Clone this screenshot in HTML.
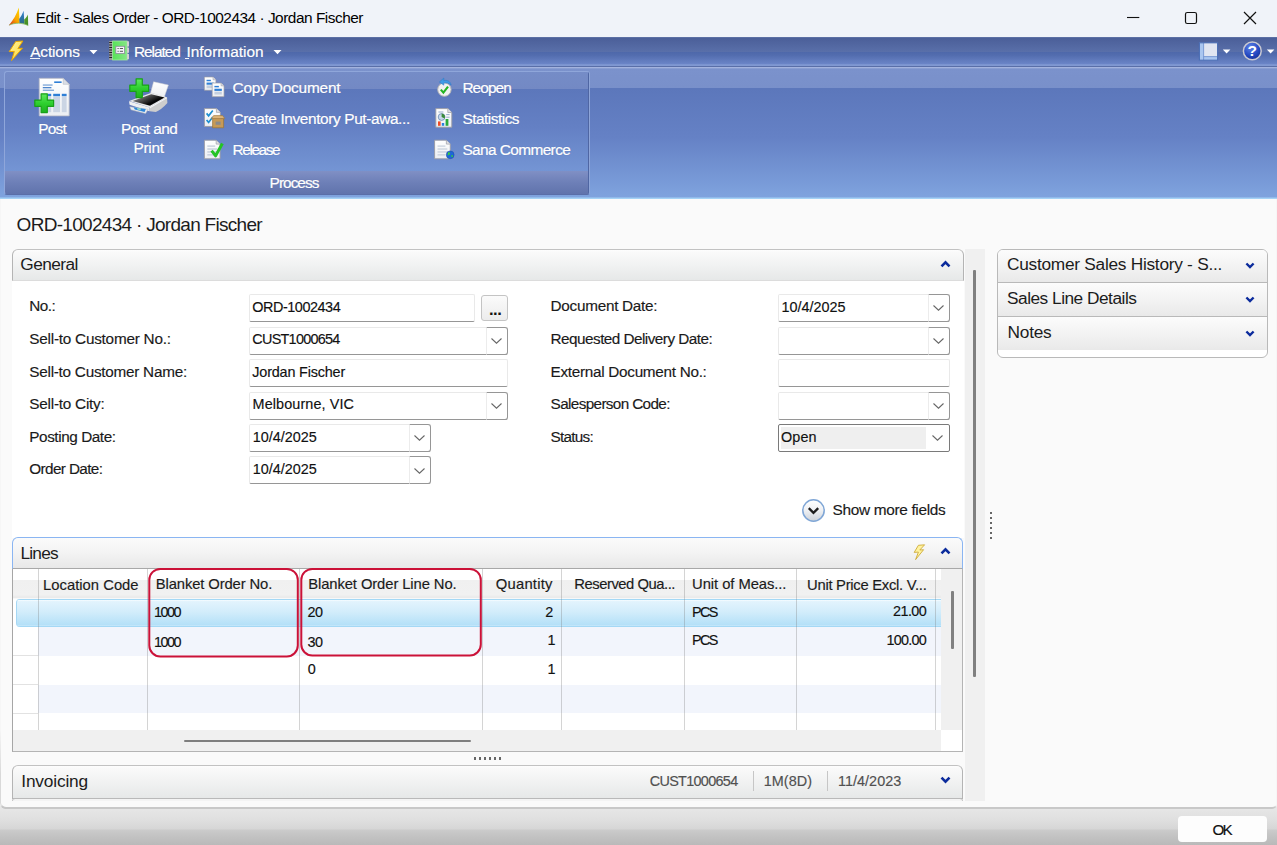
<!DOCTYPE html><html lang="en"><head><meta charset="utf-8"><title>Edit - Sales Order - ORD-1002434 · Jordan Fischer</title><style>
*{box-sizing:border-box;margin:0;padding:0}
html,body{width:1277px;height:845px;overflow:hidden;background:#fafafa}
body{position:relative;font-family:"Liberation Sans",sans-serif;}
.t{position:absolute;white-space:nowrap;font-family:"Liberation Sans",sans-serif;}
.a{position:absolute}
svg{position:absolute;overflow:visible}
.sh{-webkit-text-stroke:.22px #fff;text-shadow:0 0 1px rgba(40,60,120,.3)}
.dk{-webkit-text-stroke:.15px currentColor}
/* inputs */
.in{position:absolute;background:#fff;border:1px solid #e9e9e9;border-bottom:1px solid #969696;border-radius:2px;height:28px}
.dd{position:absolute;right:-1px;top:-1px;width:22px;height:28px;border-left:1px solid #ececec;border-top:1px solid #969696;border-right:1px solid #969696;border-bottom:1px solid #969696;border-radius:0 3px 3px 0;background:#fff}
.dd svg{left:4.4px;top:10.2px}
.hdr{position:absolute;border:1px solid #b4b4b4;border-top:1.5px solid #c2c2c2;border-bottom:1px solid #dcdcdc;border-radius:6px 6px 0 0;background:linear-gradient(#fdfdfd 0,#fafafa 2px,#f1f2f2 50%,#e6e8e8)}
</style></head><body>
<div class="a" style="left:0;top:0;width:1277px;height:37px;background:#f0f3f9"></div>
<svg style="left:0;top:0" width="40" height="37" viewBox="0 0 40 37"><defs><linearGradient id="nv1" x1="0.9" y1="0" x2="0.1" y2="1"><stop offset="0" stop-color="#ffd400"/><stop offset=".55" stop-color="#f8a400"/><stop offset="1" stop-color="#d8301a"/></linearGradient><linearGradient id="nv2" x1="0" y1="0" x2="0" y2="1"><stop offset="0" stop-color="#2f7fd0"/><stop offset="1" stop-color="#2c6a86"/></linearGradient><linearGradient id="nv3" x1="0" y1="0" x2="0" y2="1"><stop offset="0" stop-color="#5aa02a"/><stop offset="1" stop-color="#3f8a24"/></linearGradient></defs>
<path d="M18.8 7.4 C16.9 14 13.2 20 8.8 25.4 C12.6 23.5 16 22.9 19.7 23 Z" fill="url(#nv1)"/>
<path d="M23.6 10.8 C22.4 14 21 16.6 19.2 19 L19.5 23 C21.2 23 22.8 23.4 24.5 23.9 Z" fill="url(#nv2)"/>
<path d="M27.9 14.4 C27 16.4 25.8 18 24.2 19.6 L24.4 23.9 C25.7 24.3 27 24.9 28.2 25.6 Z" fill="url(#nv3)"/>
<path d="M9.200 25.100 C15 22.600 22 22.600 28.200 25.500" fill="none" stroke="#7ab648" stroke-width=".7"/>
</svg>

<span class="t " style="left:35.70px;top:7.86px;font-size:15.40px;line-height:20px;letter-spacing:-0.477px;color:#000;">Edit - Sales Order - ORD-1002434 · Jordan Fischer</span>
<svg style="left:1120px;top:5px" width="150" height="26" viewBox="1120 5 150 26"><path d="M1127 17.5H1139.3" stroke="#111" stroke-width="1.1" fill="none"/><rect x="1185.5" y="12.5" width="11" height="11" rx="1.8" fill="none" stroke="#111" stroke-width="1.2"/><path d="M1244 12 L1256 24 M1256 12 L1244 24" stroke="#111" stroke-width="1.2" fill="none"/></svg>
<div class="a" style="left:0;top:37px;width:1277px;height:29px;background:linear-gradient(#485c96 0,#4c609a 2px,#596fa9 14.7px,#4e68aa 15.2px,#526cae 18px,#6b85c7 27px,#7f97d1 27.6px,#8199d2 29px)"></div>
<div class="a" style="left:0;top:37px;width:1277px;height:1px;background:#5b6fa4"></div>
<div class="a" style="left:0;top:65.6px;width:1277px;height:1.2px;background:#5a6fa8"></div>
<svg style="left:0;top:37px" width="1277" height="30" viewBox="0 37 1277 30"><defs><linearGradient id="lt1" x1="0" y1="0" x2="1" y2="1"><stop offset="0" stop-color="#fff2a8"/><stop offset=".6" stop-color="#ffe45c"/><stop offset="1" stop-color="#f5b800"/></linearGradient><radialGradient id="hp1" cx=".4" cy=".3" r=".8"><stop offset="0" stop-color="#5f84e8"/><stop offset=".6" stop-color="#2347c0"/><stop offset="1" stop-color="#12298a"/></radialGradient><linearGradient id="nb1" x1="0" y1="0" x2="1" y2="0"><stop offset="0" stop-color="#58e458"/><stop offset="1" stop-color="#86e486"/></linearGradient></defs>
<path d="M22.9 41 L15.7 41.5 L9.2 51.6 L14.3 51.4 L11.6 60.6 L22.4 48.2 L17.9 48.5 Z" fill="url(#lt1)" stroke="#e8a700" stroke-width="1" stroke-linejoin="round"/>
<path d="M89.5 50 h8 l-4 4.2 z M273.5 50 h8 l-4 4.2 z" fill="#fff"/>
<rect x="109.2" y="41" width="3.6" height="19" fill="#9a9a9a"/><path d="M109.2 42.5h3.6M109.2 45h3.6M109.2 47.5h3.6M109.2 50h3.6M109.2 52.5h3.6M109.2 55h3.6M109.2 57.5h3.6" stroke="#222" stroke-width="1.2"/>
<rect x="112.6" y="41" width="14.6" height="19" fill="url(#nb1)" stroke="#a4e8a4" stroke-width=".8"/><rect x="127" y="41.3" width="2" height="5.2" fill="#cfcfcf"/><rect x="127" y="47.6" width="2" height="5.2" fill="#cfcfcf"/><rect x="127" y="54" width="2" height="5.2" fill="#cfcfcf"/>
<rect x="115.8" y="46.3" width="8.8" height="7.2" fill="#f4f4f8" stroke="#8a8a9a" stroke-width=".8"/><path d="M117.5 48.5h1.2M119.8 48.5h3.2M117.5 51.3h1.2M119.8 51.3h3.2" stroke="#555" stroke-width="1"/>
<rect x="1199.4" y="42.8" width="18.2" height="17.4" fill="#e0e5f1"/><rect x="1199.4" y="42.8" width="3.8" height="17.4" fill="#a9c6f0"/><rect x="1203.2" y="56.8" width="14.4" height="3.4" fill="#a9c6f0"/><path d="M1203.6 42.8V60.2M1203.6 56.600H1217.600" stroke="#6f93d2" stroke-width=".9" fill="none"/><rect x="1199.4" y="42.8" width="18.2" height="17.4" fill="none" stroke="#4a6db4" stroke-width="1.1"/>
<path d="M1222.8 49.5 h7.6 l-3.8 4 z M1266.8 49.5 h7.6 l-3.8 4 z" fill="#fff"/>
<circle cx="1252.3" cy="50.9" r="8.9" fill="url(#hp1)" stroke="#c9c9d2" stroke-width="1.5"/>
<text x="1252.3" y="56.4" text-anchor="middle" font-family="Liberation Sans, sans-serif" font-weight="bold" font-size="15.5" fill="#fff">?</text>
</svg>

<span class="t sh" style="left:30.20px;top:41.86px;font-size:15.40px;line-height:20px;letter-spacing:-0.133px;color:#fff;">Actions</span>
<div class="a" style="left:30px;top:58.3px;width:10.2px;height:1.1px;background:#f4f6fb"></div>
<span class="t sh" style="left:134.00px;top:41.86px;font-size:15.40px;line-height:20px;letter-spacing:-1.047px;color:#fff;">Related</span>
<span class="t sh" style="left:186.40px;top:41.86px;font-size:15.40px;line-height:20px;letter-spacing:0.027px;color:#fff;">Information</span>
<div class="a" style="left:185.4px;top:58.3px;width:3.8px;height:1.1px;background:#f4f6fb"></div>
<div class="a" style="left:0;top:67px;width:1277px;height:130px;background:linear-gradient(#a6b5de 0,#a0b0dc 1px,#7b92cc 1.8px,#7990ca 21px,#5c77bb 21.5px,#6581c5 70px,#7fa3de 130px)"></div>
<div class="a" style="left:0;top:197px;width:1277px;height:2.7px;background:linear-gradient(#86a8e0 0,#9ccbf3 1px,#a9d6f7 1.8px,#e6f1fb 2.7px)"></div>
<div class="a" style="left:4px;top:71px;width:586px;height:124px;border-radius:3px;border-left:1px solid #8fa6da;border-top:1px solid #8fa6da;border-right:1px solid #8ea5d8;border-bottom:1px solid #5a6ea8;overflow:hidden;background:linear-gradient(#758cc7 0,#7389c4 17px,#5c77bb 17.5px,#6480c4 55px,#7495d4 99px,#7f8fc4 99.5px,#6e80b8 110px,#5f72ab 123px)"><div class="a" style="right:0;top:0;width:1px;height:124px;background:#4f66a3"></div></div>
<svg style="left:0;top:67px" width="600" height="130" viewBox="0 67 600 130"><defs>
<linearGradient id="gp" x1="0" y1="0" x2="0" y2="1"><stop offset="0" stop-color="#5fe85f"/><stop offset=".5" stop-color="#2fd02f"/><stop offset="1" stop-color="#1db01d"/></linearGradient>
<linearGradient id="dc" x1="0" y1="0" x2="0" y2="1"><stop offset="0" stop-color="#ffffff"/><stop offset="1" stop-color="#eceef2"/></linearGradient>
<linearGradient id="pt" x1="0" y1="0" x2="1" y2=".7"><stop offset="0" stop-color="#b4b4b4"/><stop offset=".45" stop-color="#4a4a4a"/><stop offset=".75" stop-color="#050505"/><stop offset="1" stop-color="#2a2a2a"/></linearGradient>
<g id="plus"><path d="M6.9 0.6 h6.2 v6.3 h6.3 v6.2 h-6.3 v6.3 h-6.2 v-6.3 h-6.3 v-6.2 h6.3 z" fill="url(#gp)" stroke="#18a018" stroke-width="1.2" stroke-linejoin="round"/></g>
<g id="sdoc"><path d="M0 0 h12 l4 4 v15 h-16 z" fill="url(#dc)" stroke="#9a9aa2" stroke-width=".9"/><path d="M12 0 v4 h4" fill="#e0e0e4" stroke="#9a9aa2" stroke-width=".7"/></g>
</defs>
<!-- Post -->
<path d="M39.2 78.3 h24 l6 6 v31.6 h-30 z" fill="url(#dc)" stroke="#b4b8c4" stroke-width=".8"/><path d="M63.2 78.3 v6 h6 z" fill="#dcdfe6" stroke="#b4b8c4" stroke-width=".6"/>
<rect x="54.2" y="81.4" width="7.4" height="1.6" fill="#2f7fd6"/><rect x="42.8" y="84.4" width="9.8" height="1.3" fill="#7da6d8"/><rect x="42.8" y="87" width="8.6" height="1.3" fill="#4e86cc"/><rect x="42.8" y="89.6" width="11.2" height="1.3" fill="#7da6d8"/>
<rect x="47.6" y="96.6" width="3.6" height="15.6" fill="#cbd5e4"/><rect x="53.2" y="96.6" width="6.8" height="15.6" fill="#cbd5e4"/><rect x="61.8" y="96.6" width="4.8" height="15.6" fill="#cbd5e4"/>
<rect x="47.6" y="93.8" width="3.6" height="2.4" fill="#2f7fd6"/><rect x="53.2" y="93.8" width="6.8" height="2.4" fill="#2f7fd6"/><rect x="61.8" y="93.8" width="4.8" height="2.4" fill="#2f7fd6"/>
<use href="#plus" x="34.2" y="93.2"/>
<!-- Post and Print -->
<path d="M153.6 81.8 L168.4 85 L164.2 97.2 L150.6 92.8 Z" fill="url(#dc)" stroke="#d0d0d0" stroke-width=".5"/>
<path d="M129.2 101 L151.4 92.8 L167 97.2 L149.6 107.6 Z" fill="#e9e9e9"/>
<path d="M132.6 100.9 L151.2 94.2 L164.6 97.6 L150 105.8 Z" fill="url(#pt)"/>
<path d="M129 101.2 L149.6 107.6 L149.6 111.2 L129.6 104.8 Z" fill="#f0f0f0"/>
<path d="M149.6 107.6 L167 97.4 L167.4 103 Q161.500 109.600 155.800 111.900 L149.600 111.200 Z" fill="#cdcdcd"/><path d="M149.8 107.700 L167 97.600" stroke="#f6f6f6" stroke-width="1.1"/>
<path d="M129.800 106.800 L148.200 109.300 L145.600 113.500 L131 109.800 Z" fill="#e6ebf2" stroke="#b8b8b8" stroke-width=".5"/><path d="M133.600 107.200 L145.800 109.100 L144.600 111.900 L134.800 109.400 Z" fill="#2f86d8"/><path d="M137 108 L141 108.600 L140.400 110.200 L137.400 109.600 Z" fill="#9fe0c0"/>
<use href="#plus" x="129.200" y="78.200"/>
<!-- Copy Document -->
<g transform="translate(204.4 77) scale(.72 .7)"><use href="#sdoc"/><rect x="3" y="4" width="6" height="2" fill="#2f7fd6"/><rect x="3" y="8" width="10" height="3" fill="#2f7fd6"/><rect x="3" y="12" width="10" height="4" fill="#c4cfdf"/></g>
<g transform="translate(212.2 83) scale(.74 .72)"><use href="#sdoc"/><rect x="3" y="4" width="6" height="2" fill="#2f7fd6"/><rect x="3" y="8" width="10" height="3" fill="#2f7fd6"/><rect x="3" y="12" width="10" height="4" fill="#c4cfdf"/></g>
<!-- Create Inventory Put-away -->
<g transform="translate(204.4 108.6) scale(1 .94)"><use href="#sdoc"/></g>
<path d="M206.6 113.4 l2 2.4 l4.2 -5.4 M206.6 120 l2 2.4 l4.2 -5.4" fill="none" stroke="#1f8fd0" stroke-width="1.7"/>
<path d="M212.6 118.4 h11 v9.4 h-11 z" fill="#c79a56" stroke="#9a7236" stroke-width=".7"/><path d="M211.4 118.6 l2.2 -3 h9 l2.2 3 z" fill="#dcb478" stroke="#9a7236" stroke-width=".6"/><rect x="215.6" y="121.6" width="5" height="3.2" fill="#8a8a8a"/>
<!-- Release -->
<g transform="translate(204.4 140.2) scale(.98 .98)"><use href="#sdoc"/><path d="M3 6h8M3 9h10M3 12h10M3 15h8" stroke="#a9b6cc" stroke-width=".9"/></g>
<path d="M211.6 150.6 L215.6 155.8 L222.4 143.6" fill="none" stroke="#24c424" stroke-width="3" stroke-linejoin="round"/>
<!-- Reopen -->
<circle cx="444.4" cy="89.6" r="6.7" fill="#f1f1f1" stroke="#b8b8b8" stroke-width="1"/>
<path d="M440.8 89.6 l2.6 3 l4.6 -6" fill="none" stroke="#22b422" stroke-width="2.1"/>
<path d="M451.2 85 C450.4 81.4 446.8 79.6 443.8 80.6 L443.8 78 L439.4 82 L443.8 85.2 L443.8 83 C446.2 82.4 448.8 83.2 451.2 85 Z" fill="#3f9ae6" stroke="#2a78c4" stroke-width=".5"/>
<!-- Statistics -->
<g transform="translate(435.8 108.6) scale(1 .98)"><use href="#sdoc"/></g>
<circle cx="441.6" cy="117" r="3.4" fill="#c8d8ea" stroke="#6a8ab4" stroke-width=".8"/><path d="M441.6 117 v-3.4 a3.4 3.4 0 0 1 3 5 z" fill="#3a8a3a"/>
<path d="M438.4 112h5M446.2 114.6h3.4M446.2 117.2h3.4" stroke="#8aa4c8" stroke-width=".9"/>
<rect x="438" y="121.4" width="2.6" height="4.4" fill="#f04a24"/><rect x="441.8" y="123" width="2.4" height="2.8" fill="#2a80e0"/><rect x="445.6" y="119" width="2.8" height="6.8" fill="#2aaa3a"/>
<!-- Sana Commerce -->
<g transform="translate(434.6 140.2) scale(.98 .98)"><use href="#sdoc"/><path d="M3 6h8M3 9h10M3 12h10M3 15h8" stroke="#b4bfd0" stroke-width=".9"/></g>
<circle cx="450.2" cy="154.8" r="3.9" fill="#1f66d8" stroke="#1a4aa4" stroke-width=".5"/><path d="M448 152.6 c1.4 -.8 2.6 .2 2 1.4 c-.6 1 -1.800 .8 -2.400 2 z M451.4 155.200 c1.200 -.4 2 .4 1.400 1.600 c-.6 .8 -1.600 .6 -1.400 -1.600 z" fill="#3ad03a"/>
</svg>

<span class="t sh" style="left:38.20px;top:119.26px;font-size:15.40px;line-height:20px;letter-spacing:-0.738px;color:#fff;">Post</span>
<span class="t sh" style="left:121.10px;top:119.26px;font-size:15.40px;line-height:20px;letter-spacing:-0.583px;color:#fff;">Post and</span>
<span class="t sh" style="left:133.50px;top:137.76px;font-size:15.40px;line-height:20px;letter-spacing:-0.291px;color:#fff;">Print</span>
<span class="t sh" style="left:232.60px;top:77.66px;font-size:15.40px;line-height:20px;letter-spacing:-0.201px;color:#fff;">Copy Document</span>
<span class="t sh" style="left:232.60px;top:108.86px;font-size:15.40px;line-height:20px;letter-spacing:-0.375px;color:#fff;">Create Inventory Put-awa...</span>
<span class="t sh" style="left:232.60px;top:140.26px;font-size:15.40px;line-height:20px;letter-spacing:-1.417px;color:#fff;">Release</span>
<span class="t sh" style="left:462.40px;top:77.66px;font-size:15.40px;line-height:20px;letter-spacing:-0.909px;color:#fff;">Reopen</span>
<span class="t sh" style="left:462.40px;top:108.86px;font-size:15.40px;line-height:20px;letter-spacing:-0.491px;color:#fff;">Statistics</span>
<span class="t sh" style="left:462.40px;top:140.26px;font-size:15.40px;line-height:20px;letter-spacing:-0.587px;color:#fff;">Sana Commerce</span>
<span class="t sh" style="left:269.60px;top:172.96px;font-size:15.40px;line-height:20px;letter-spacing:-0.971px;color:#fff;">Process</span>
<div class="a" style="left:0;top:800px;width:1277px;height:45px;background:linear-gradient(#e6e6e6 0,#e6e6e6 9px,#dfdfdf 20px,#d6d6d6 29px,#cbcbcb 30px,#c3c3c3 36px,#b9b9b9 45px)"></div>
<div class="a" style="left:0;top:199px;width:1277px;height:609.5px;background:#fafafa;border-left:1px solid #f6f6f6;border-right:1px solid #f6f6f6;border-bottom:2px solid #c8c8c8;border-radius:0 0 5px 6px"></div>
<div class="a" style="left:0;top:730px;width:10px;height:78.5px;border-left:1px solid #d9d9d9;border-bottom:2px solid #c6c6c6;border-radius:0 0 0 6px;-webkit-mask-image:linear-gradient(transparent,#000 55%);mask-image:linear-gradient(transparent,#000 55%)"></div>
<span class="t " style="left:16.60px;top:211.52px;font-size:19.00px;line-height:25px;letter-spacing:-0.703px;color:#1c1c1c;">ORD-1002434 · Jordan Fischer</span>
<div class="a" style="left:965px;top:249px;width:20px;height:552px;background:#f0f0f0"></div>
<div class="a" style="left:973px;top:270px;width:3px;height:407px;background:#808080;border-radius:1px"></div>
<div class="a" style="left:12px;top:280px;width:952px;height:258px;background:#fff"></div>
<div class="hdr" style="left:12px;top:249px;width:952px;height:32px"></div>
<span class="t " style="left:20.30px;top:253.01px;font-size:17.30px;line-height:23px;letter-spacing:-0.559px;color:#1c1c1c;">General</span>
<svg style="left:940px;top:260px" width="11" height="8" viewBox="0 0 11 8"><path d="M1.5 6.4 L5.5 2.4 L9.5 6.4" fill="none" stroke="#0b2b9c" stroke-width="2.6"/></svg>
<span class="t dk" style="left:29.30px;top:296.40px;font-size:15.30px;line-height:20px;letter-spacing:-0.520px;color:#1a1a1a;">No.:</span>
<span class="t dk" style="left:29.30px;top:329.00px;font-size:15.30px;line-height:20px;letter-spacing:-0.228px;color:#1a1a1a;">Sell-to Customer No.:</span>
<span class="t dk" style="left:29.30px;top:361.60px;font-size:15.30px;line-height:20px;letter-spacing:-0.255px;color:#1a1a1a;">Sell-to Customer Name:</span>
<span class="t dk" style="left:29.30px;top:394.10px;font-size:15.30px;line-height:20px;letter-spacing:-0.226px;color:#1a1a1a;">Sell-to City:</span>
<span class="t dk" style="left:29.30px;top:426.60px;font-size:15.30px;line-height:20px;letter-spacing:-0.429px;color:#1a1a1a;">Posting Date:</span>
<span class="t dk" style="left:29.30px;top:459.10px;font-size:15.30px;line-height:20px;letter-spacing:-0.623px;color:#1a1a1a;">Order Date:</span>
<span class="t dk" style="left:550.60px;top:296.40px;font-size:15.30px;line-height:20px;letter-spacing:-0.274px;color:#1a1a1a;">Document Date:</span>
<span class="t dk" style="left:550.60px;top:329.00px;font-size:15.30px;line-height:20px;letter-spacing:-0.532px;color:#1a1a1a;">Requested Delivery Date:</span>
<span class="t dk" style="left:550.60px;top:361.60px;font-size:15.30px;line-height:20px;letter-spacing:-0.292px;color:#1a1a1a;">External Document No.:</span>
<span class="t dk" style="left:550.60px;top:394.10px;font-size:15.30px;line-height:20px;letter-spacing:-0.639px;color:#1a1a1a;">Salesperson Code:</span>
<span class="t dk" style="left:550.60px;top:426.60px;font-size:15.30px;line-height:20px;letter-spacing:-0.738px;color:#1a1a1a;">Status:</span>
<div class="in" style="left:249px;top:294.0px;width:226px;height:28px"></div>
<div class="a" style="left:481px;top:295px;width:27px;height:26px;border:1px solid #c4c4c4;border-radius:3px;background:linear-gradient(#fbfbfb,#ececec)"></div>
<span class="t " style="left:489.00px;top:297.98px;font-size:16.50px;line-height:22px;letter-spacing:-0.472px;color:#111;font-weight:bold">...</span>
<div class="in" style="left:249px;top:326.5px;width:259px;height:28px"><div class="dd" style="height:28px"><svg width="11" height="6" viewBox="0 0 11 6"><path d="M0.5 0.5 L5.5 5.2 L10.5 0.5" fill="none" stroke="#666" stroke-width="1.05"/></svg></div></div>
<div class="in" style="left:249px;top:359.2px;width:259px;height:28px"></div>
<div class="in" style="left:249px;top:391.6px;width:259px;height:28px"><div class="dd" style="height:28px"><svg width="11" height="6" viewBox="0 0 11 6"><path d="M0.5 0.5 L5.5 5.2 L10.5 0.5" fill="none" stroke="#666" stroke-width="1.05"/></svg></div></div>
<div class="in" style="left:249px;top:424.0px;width:182px;height:28px"><div class="dd" style="height:28px"><svg width="11" height="6" viewBox="0 0 11 6"><path d="M0.5 0.5 L5.5 5.2 L10.5 0.5" fill="none" stroke="#666" stroke-width="1.05"/></svg></div></div>
<div class="in" style="left:249px;top:456.4px;width:182px;height:28px"><div class="dd" style="height:28px"><svg width="11" height="6" viewBox="0 0 11 6"><path d="M0.5 0.5 L5.5 5.2 L10.5 0.5" fill="none" stroke="#666" stroke-width="1.05"/></svg></div></div>
<div class="in" style="left:778px;top:294.0px;width:172px;height:28px"><div class="dd" style="height:28px"><svg width="11" height="6" viewBox="0 0 11 6"><path d="M0.5 0.5 L5.5 5.2 L10.5 0.5" fill="none" stroke="#666" stroke-width="1.05"/></svg></div></div>
<div class="in" style="left:778px;top:326.5px;width:172px;height:28px"><div class="dd" style="height:28px"><svg width="11" height="6" viewBox="0 0 11 6"><path d="M0.5 0.5 L5.5 5.2 L10.5 0.5" fill="none" stroke="#666" stroke-width="1.05"/></svg></div></div>
<div class="in" style="left:778px;top:359.2px;width:172px;height:28px"></div>
<div class="in" style="left:778px;top:391.6px;width:172px;height:28px"><div class="dd" style="height:28px"><svg width="11" height="6" viewBox="0 0 11 6"><path d="M0.5 0.5 L5.5 5.2 L10.5 0.5" fill="none" stroke="#666" stroke-width="1.05"/></svg></div></div>
<div class="a" style="left:778px;top:424px;width:172px;height:28px;border:1px solid #7a7a7a;border-radius:2px;background:#fff"><div class="a" style="left:2px;top:2px;width:145px;height:22px;background:#efefef"></div><svg style="left:153.4px;top:10.2px" width="11" height="6" viewBox="0 0 11 6"><path d="M0.5 0.5 L5.5 5.2 L10.5 0.5" fill="none" stroke="#666" stroke-width="1.05"/></svg></div>
<span class="t dk" style="left:252.30px;top:297.81px;font-size:14.40px;line-height:19px;letter-spacing:-0.445px;color:#111;">ORD-1002434</span>
<span class="t dk" style="left:252.30px;top:330.31px;font-size:14.40px;line-height:19px;letter-spacing:-0.716px;color:#111;">CUST1000654</span>
<span class="t dk" style="left:252.30px;top:362.91px;font-size:14.40px;line-height:19px;letter-spacing:-0.172px;color:#111;">Jordan Fischer</span>
<span class="t dk" style="left:252.60px;top:394.91px;font-size:14.40px;line-height:19px;letter-spacing:0.104px;color:#111;">Melbourne, VIC</span>
<span class="t dk" style="left:252.80px;top:427.51px;font-size:14.40px;line-height:19px;letter-spacing:-0.008px;color:#111;">10/4/2025</span>
<span class="t dk" style="left:252.80px;top:460.01px;font-size:14.40px;line-height:19px;letter-spacing:-0.008px;color:#111;">10/4/2025</span>
<span class="t dk" style="left:781.50px;top:297.81px;font-size:14.40px;line-height:19px;letter-spacing:-0.008px;color:#111;">10/4/2025</span>
<span class="t dk" style="left:781.00px;top:427.81px;font-size:14.40px;line-height:19px;letter-spacing:0.093px;color:#111;">Open</span>
<svg style="left:802px;top:498.8px" width="23" height="23" viewBox="0 0 23 23"><defs><linearGradient id="smf" x1="0" y1="0" x2="0" y2="1"><stop offset="0" stop-color="#ffffff"/><stop offset=".5" stop-color="#eef0f3"/><stop offset="1" stop-color="#cdd2d9"/></linearGradient></defs><circle cx="11.5" cy="11.5" r="10.7" fill="url(#smf)" stroke="#7fa6d6" stroke-width="1.5"/><path d="M6.8 9.1 L11.5 13.9 L16.2 9.1" fill="none" stroke="#1e1e1e" stroke-width="2.3"/></svg>
<span class="t dk" style="left:832.50px;top:500.26px;font-size:15.40px;line-height:20px;letter-spacing:-0.321px;color:#1a1a1a;">Show more fields</span>
<div class="a" style="left:12px;top:568px;width:951px;height:184px;background:#fff;border:1px solid #b4b4b4;border-left:1.5px solid #a6a6a6;border-top:none"></div>
<div class="hdr" style="left:12px;top:537px;width:951px;height:32px;border:1.5px solid #8ab5f2;border-bottom:1.5px solid #a8a8a8;background:linear-gradient(#fbfbfb,#f3f3f3 50%,#e8e8e8)"></div>
<span class="t " style="left:20.50px;top:541.91px;font-size:17.30px;line-height:23px;letter-spacing:-0.791px;color:#1c1c1c;">Lines</span>
<svg style="left:912px;top:544px" width="14" height="17" viewBox="0 0 14 17"><path d="M12.6 0.8 L6.4 1.3 L2.2 8.4 L6.4 8.1 L3.6 15.6 L11.6 5.7 L7.8 6 Z" fill="#fff3a0" stroke="#c9a227" stroke-width="0.8" stroke-linejoin="round"/></svg>
<svg style="left:940px;top:547px" width="11" height="8" viewBox="0 0 11 8"><path d="M1.5 6.4 L5.5 2.4 L9.5 6.4" fill="none" stroke="#0b2b9c" stroke-width="2.6"/></svg>
<div class="a" style="left:13px;top:569px;width:928px;height:30px;background:linear-gradient(#fff 0,#fff 10.6px,#f0f0f0 11.2px,#f1f1f1 26px,#e9e9e9 28.4px,#f4f4f4 29px,#fafcfe 30px)"></div>
<div class="a" style="left:16px;top:599px;width:925px;height:28px;border-radius:4px 0 0 4px;border-left:1px solid #a5d7f4;background:linear-gradient(#a4d8f5 0,#a4d8f5 1px,#f4fbff 1.2px,#e2f3fd 2.6px,#d3edfb 45%,#b6e1f8 90%,#b2dff8 26.4px,#f0f9fe 26.8px,#a4d8f5 27.4px)"></div>
<div class="a" style="left:13px;top:627px;width:928px;height:29px;background:#f2f5fc"></div>
<div class="a" style="left:13px;top:685px;width:928px;height:28px;background:#f2f5fc"></div>
<div class="a" style="left:13px;top:627px;width:25px;height:29px;background:#fff"></div>
<div class="a" style="left:13px;top:685px;width:25px;height:28px;background:#fff"></div>
<div class="a" style="left:13px;top:655px;width:25px;height:1px;background:#e2e2e2"></div><div class="a" style="left:13px;top:684px;width:25px;height:1px;background:#e2e2e2"></div><div class="a" style="left:13px;top:713px;width:25px;height:1px;background:#e2e2e2"></div>
<div class="a" style="left:38px;top:569px;width:1px;height:161px;background:rgba(120,120,120,.32)"></div>
<div class="a" style="left:147px;top:569px;width:1px;height:161px;background:rgba(120,120,120,.32)"></div>
<div class="a" style="left:299px;top:569px;width:1px;height:161px;background:rgba(120,120,120,.32)"></div>
<div class="a" style="left:482px;top:569px;width:1px;height:161px;background:rgba(120,120,120,.32)"></div>
<div class="a" style="left:561px;top:569px;width:1px;height:161px;background:rgba(120,120,120,.32)"></div>
<div class="a" style="left:684px;top:569px;width:1px;height:161px;background:rgba(120,120,120,.32)"></div>
<div class="a" style="left:796px;top:569px;width:1px;height:161px;background:rgba(120,120,120,.32)"></div>
<div class="a" style="left:935px;top:569px;width:1px;height:161px;background:rgba(120,120,120,.32)"></div>
<div class="a" style="left:13px;top:730px;width:928px;height:21px;background:#f0f0f0"></div>
<div class="a" style="left:184px;top:740px;width:286.5px;height:2.4px;background:#7f7f7f;border-radius:1px"></div>
<div class="a" style="left:941px;top:569px;width:21px;height:161px;background:#f0f0f0"></div>
<div class="a" style="left:950.5px;top:591px;width:3px;height:58px;background:#808080;border-radius:1px"></div>
<span class="t dk" style="left:43.10px;top:574.67px;font-size:14.80px;line-height:20px;letter-spacing:0.005px;color:#1a1a1a;">Location Code</span>
<span class="t dk" style="left:155.80px;top:574.47px;font-size:14.80px;line-height:20px;letter-spacing:-0.122px;color:#1a1a1a;">Blanket Order No.</span>
<span class="t dk" style="left:308.20px;top:574.47px;font-size:14.80px;line-height:20px;letter-spacing:-0.097px;color:#1a1a1a;">Blanket Order Line No.</span>
<span class="t dk" style="left:495.70px;top:574.47px;font-size:14.80px;line-height:20px;letter-spacing:0.241px;color:#1a1a1a;">Quantity</span>
<span class="t dk" style="left:574.30px;top:574.47px;font-size:14.80px;line-height:20px;letter-spacing:-0.468px;color:#1a1a1a;">Reserved Qua...</span>
<span class="t dk" style="left:692.10px;top:574.47px;font-size:14.80px;line-height:20px;letter-spacing:-0.073px;color:#1a1a1a;">Unit of Meas...</span>
<span class="t dk" style="left:807.10px;top:574.67px;font-size:14.80px;line-height:20px;letter-spacing:-0.280px;color:#1a1a1a;">Unit Price Excl. V...</span>
<span class="t dk" style="left:153.90px;top:602.61px;font-size:14.40px;line-height:19px;letter-spacing:-1.447px;color:#111;">1000</span>
<span class="t dk" style="left:153.90px;top:632.81px;font-size:14.40px;line-height:19px;letter-spacing:-1.447px;color:#111;">1000</span>
<span class="t dk" style="left:307.40px;top:602.51px;font-size:14.40px;line-height:19px;letter-spacing:-0.513px;color:#111;">20</span>
<span class="t dk" style="left:307.40px;top:633.11px;font-size:14.40px;line-height:19px;letter-spacing:-0.513px;color:#111;">30</span>
<span class="t dk" style="left:307.80px;top:659.91px;font-size:14.40px;line-height:19px;letter-spacing:0.000px;color:#111;">0</span>
<span class="t dk" style="left:545.30px;top:602.51px;font-size:14.40px;line-height:19px;letter-spacing:0.000px;color:#111;">2</span>
<span class="t dk" style="left:547.60px;top:631.11px;font-size:14.40px;line-height:19px;letter-spacing:0.000px;color:#111;">1</span>
<span class="t dk" style="left:547.60px;top:659.71px;font-size:14.40px;line-height:19px;letter-spacing:0.000px;color:#111;">1</span>
<span class="t dk" style="left:692.10px;top:602.51px;font-size:14.40px;line-height:19px;letter-spacing:-1.653px;color:#111;">PCS</span>
<span class="t dk" style="left:692.10px;top:631.11px;font-size:14.40px;line-height:19px;letter-spacing:-1.653px;color:#111;">PCS</span>
<span class="t dk" style="left:893.00px;top:602.41px;font-size:14.40px;line-height:19px;letter-spacing:-0.557px;color:#111;">21.00</span>
<span class="t dk" style="left:886.40px;top:631.11px;font-size:14.40px;line-height:19px;letter-spacing:-0.730px;color:#111;">100.00</span>
<svg style="left:0;top:0" width="1277" height="845" viewBox="0 0 1277 845"><rect x="149.3" y="568.9" width="148.5" height="87.6" rx="11" fill="none" stroke="#cb1238" stroke-width="2"/><rect x="301.3" y="568.9" width="179.5" height="86.6" rx="11" fill="none" stroke="#cb1238" stroke-width="2"/></svg>
<div class="a" style="left:474.1px;top:757.4px;width:2.3px;height:2.3px;background:#666"></div>
<div class="a" style="left:989.6px;top:512.1px;width:2.3px;height:2.3px;background:#666"></div>
<div class="a" style="left:479.1px;top:757.4px;width:2.3px;height:2.3px;background:#666"></div>
<div class="a" style="left:989.6px;top:517.1px;width:2.3px;height:2.3px;background:#666"></div>
<div class="a" style="left:484.2px;top:757.4px;width:2.3px;height:2.3px;background:#666"></div>
<div class="a" style="left:989.6px;top:522.2px;width:2.3px;height:2.3px;background:#666"></div>
<div class="a" style="left:489.2px;top:757.4px;width:2.3px;height:2.3px;background:#666"></div>
<div class="a" style="left:989.6px;top:527.2px;width:2.3px;height:2.3px;background:#666"></div>
<div class="a" style="left:494.2px;top:757.4px;width:2.3px;height:2.3px;background:#666"></div>
<div class="a" style="left:989.6px;top:532.2px;width:2.3px;height:2.3px;background:#666"></div>
<div class="a" style="left:499.2px;top:757.4px;width:2.3px;height:2.3px;background:#666"></div>
<div class="a" style="left:989.6px;top:537.2px;width:2.3px;height:2.3px;background:#666"></div>
<div class="hdr" style="left:12px;top:765px;width:951px;height:33.5px;border-radius:6px 6px 0 0;border-bottom:1.5px solid #b2b2b2"></div>
<div class="a" style="left:12px;top:798px;width:951px;height:3px;border-top:1px solid #b9b9b9;border-left:1px solid #c4c4c4;border-right:1px solid #c4c4c4;border-radius:5px 5px 0 0;background:#f4f4f4"></div>
<span class="t " style="left:21.30px;top:769.71px;font-size:17.30px;line-height:23px;letter-spacing:-0.173px;color:#1c1c1c;">Invoicing</span>
<span class="t dk" style="left:649.80px;top:771.51px;font-size:14.40px;line-height:19px;letter-spacing:-0.686px;color:#505050;">CUST1000654</span>
<span class="t dk" style="left:763.80px;top:771.51px;font-size:14.40px;line-height:19px;letter-spacing:0.038px;color:#505050;">1M(8D)</span>
<span class="t dk" style="left:837.90px;top:771.51px;font-size:14.40px;line-height:19px;letter-spacing:0.050px;color:#505050;">11/4/2023</span>
<div class="a" style="left:753px;top:771px;width:1px;height:20px;background:#c6c6c6"></div><div class="a" style="left:827px;top:771px;width:1px;height:20px;background:#c6c6c6"></div>
<svg style="left:940px;top:776px" width="11" height="8" viewBox="0 0 11 8"><path d="M1.5 1.7 L5.5 5.7 L9.5 1.7" fill="none" stroke="#0b2b9c" stroke-width="2.6"/></svg>
<div class="a" style="left:997px;top:249px;width:271px;height:109px;border:1px solid #b9b9b9;border-radius:6px;background:#fff;overflow:hidden"><div class="a" style="left:0;top:0;width:271px;height:33px;background:linear-gradient(#fcfcfc,#f3f3f3 50%,#e9e9e9);border-bottom:1px solid #b9b9b9"></div><div class="a" style="left:0;top:33px;width:271px;height:34px;background:linear-gradient(#fcfcfc,#f3f3f3 50%,#e9e9e9);border-bottom:1px solid #b9b9b9"></div><div class="a" style="left:0;top:67px;width:271px;height:33px;background:linear-gradient(#fcfcfc,#f3f3f3 50%,#e9e9e9)"></div></div>
<span class="t " style="left:1007.00px;top:252.91px;font-size:17.30px;line-height:23px;letter-spacing:-0.269px;color:#1c1c1c;">Customer Sales History - S...</span>
<span class="t " style="left:1007.00px;top:286.71px;font-size:17.30px;line-height:23px;letter-spacing:-0.498px;color:#1c1c1c;">Sales Line Details</span>
<span class="t " style="left:1007.50px;top:320.51px;font-size:17.30px;line-height:23px;letter-spacing:-0.222px;color:#1c1c1c;">Notes</span>
<svg style="left:1245px;top:262px" width="10" height="7" viewBox="0 0 10 7"><path d="M1.4 1.5 L5 5.1 L8.6 1.5" fill="none" stroke="#0b2b9c" stroke-width="2.4"/></svg>
<svg style="left:1245px;top:296px" width="10" height="7" viewBox="0 0 10 7"><path d="M1.4 1.5 L5 5.1 L8.6 1.5" fill="none" stroke="#0b2b9c" stroke-width="2.4"/></svg>
<svg style="left:1245px;top:330px" width="10" height="7" viewBox="0 0 10 7"><path d="M1.4 1.5 L5 5.1 L8.6 1.5" fill="none" stroke="#0b2b9c" stroke-width="2.4"/></svg>
<div class="a" style="left:1178px;top:815.6px;width:89.4px;height:26.8px;background:#fdfdfd;border-radius:4px"></div>
<span class="t dk" style="left:1212.50px;top:819.53px;font-size:15.20px;line-height:20px;letter-spacing:-1.764px;color:#111;">OK</span>
</body></html>
